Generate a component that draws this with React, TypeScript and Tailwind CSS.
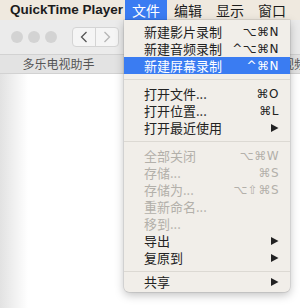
import React from 'react';

type Item =
  | { kind: 'sep' }
  | { kind: 'item'; label: string; keys?: string; sub?: boolean; disabled?: boolean; active?: boolean };

const items: Item[] = [
  { kind: 'item', label: '新建影片录制', keys: '⌥⌘N' },
  { kind: 'item', label: '新建音频录制', keys: '^⌥⌘N' },
  { kind: 'item', label: '新建屏幕录制', keys: '^⌘N', active: true },
  { kind: 'sep' },
  { kind: 'item', label: '打开文件...', keys: '⌘O' },
  { kind: 'item', label: '打开位置...', keys: '⌘L' },
  { kind: 'item', label: '打开最近使用', sub: true },
  { kind: 'sep' },
  { kind: 'item', label: '全部关闭', keys: '⌥⌘W', disabled: true },
  { kind: 'item', label: '存储...', keys: '⌘S', disabled: true },
  { kind: 'item', label: '存储为...', keys: '⌥⇧⌘S', disabled: true },
  { kind: 'item', label: '重新命名...', disabled: true },
  { kind: 'item', label: '移到...', disabled: true },
  { kind: 'item', label: '导出', sub: true },
  { kind: 'item', label: '复原到', sub: true },
  { kind: 'sep' },
  { kind: 'item', label: '共享', sub: true },
];

const Arrow = () => (
  <svg width="9" height="10" viewBox="0 0 9 10">
    <path d="M1 1 L8.5 5 L1 9 Z" fill="currentColor" />
  </svg>
);

const MenuRow = ({ item, last }: { item: Item; last?: boolean }) => {
  if (item.kind === 'sep') {
    return (
      <div className={last ? 'h-[7px] flex flex-col' : 'h-[11px] flex flex-col'}>
        <div className="h-[5px]" />
        <div className="h-px bg-[#dcd9d3]" />
      </div>
    );
  }
  const color = item.active ? 'bg-[#3a7cf2] text-white' : item.disabled ? 'text-[#b3b0aa]' : 'text-[#222]';
  return (
    <div className={`h-[17px] flex items-center pl-[20px] pr-[11px] whitespace-nowrap ${color}`}>
      <span className="flex-1 text-[13px] leading-none">{item.label}</span>
      {item.keys && (
        <span className="text-[12px] leading-none tracking-[0.5px] font-['DejaVu_Sans',sans-serif]">{item.keys}</span>
      )}
      {item.sub && <Arrow />}
    </div>
  );
};

export default function App() {
  return (
    <div className="relative w-[300px] h-[308px] overflow-hidden bg-white font-['Noto_Sans_CJK_SC','Noto_Sans',sans-serif]">
      {/* menu bar */}
      <div className="h-[20px] flex items-stretch bg-[#efe9df] text-[14px] text-[#1c1c1c] whitespace-nowrap">
        <div className="shrink-0 w-[125px] pl-[10px] flex items-center text-[13.5px] font-bold font-['Liberation_Sans',sans-serif]">QuickTime Player</div>
        <div className="shrink-0 px-[7px] flex items-center bg-[#3a7cf2] text-white">文件</div>
        <div className="shrink-0 px-[7px] flex items-center">编辑</div>
        <div className="shrink-0 px-[7px] flex items-center">显示</div>
        <div className="shrink-0 px-[7px] flex items-center">窗口</div>
        <div className="shrink-0 px-[7px] flex items-center">帮助</div>
      </div>

      {/* window */}
      <div className="h-[34px] bg-[#ebebeb] flex items-center pl-[11px] gap-[5px]">
        <div className="w-[12px] h-[12px] rounded-full bg-[#d3d3d3]" />
        <div className="w-[12px] h-[12px] rounded-full bg-[#d3d3d3]" />
        <div className="w-[12px] h-[12px] rounded-full bg-[#d3d3d3]" />
        <div className="ml-[10px] flex h-[20px] rounded-[4px] border border-[#d4d4d4] bg-[#f5f5f5]">
          <div className="w-[23px] flex items-center justify-center border-r border-[#d4d4d4]">
            <svg width="8" height="12" viewBox="0 0 8 12">
              <path d="M6.5 1 L1.5 6 L6.5 11" fill="none" stroke="#555" strokeWidth="1.3" />
            </svg>
          </div>
          <div className="w-[22px] flex items-center justify-center">
            <svg width="8" height="12" viewBox="0 0 8 12">
              <path d="M1.5 1 L6.5 6 L1.5 11" fill="none" stroke="#b5b5b5" strokeWidth="1.3" />
            </svg>
          </div>
        </div>
        <div className="ml-[8px] w-[20px] h-[20px] rounded-[4px] border border-[#d4d4d4] bg-[#f5f5f5]" />
      </div>
      <div className="h-[20px] bg-[#e3e3e3] border-t border-[#d2d2d2] border-b flex text-[12px] text-[#555] whitespace-nowrap">
        <div className="w-[117px] shrink-0 flex items-center justify-center">多乐电视助手</div>
        <div className="flex-1 flex items-center justify-end -mr-[6px]">在线视频</div>
      </div>
      <div className="flex h-[234px]">
        <div className="w-[28px] bg-gradient-to-r from-[#e2e2e2] to-white" />
      </div>

      {/* dropdown */}
      <div className="absolute left-[124px] top-[20px] w-[166px] pt-[3px] pb-[2px] bg-[#f1eee9] rounded-b-[5px] shadow-[0_3px_10px_rgba(0,0,0,0.25),0_0_0_0.5px_rgba(0,0,0,0.15)]">
        {items.map((it, i) => (
          <MenuRow key={i} item={it} last={i === items.length - 2} />
        ))}
      </div>
    </div>
  );
}
